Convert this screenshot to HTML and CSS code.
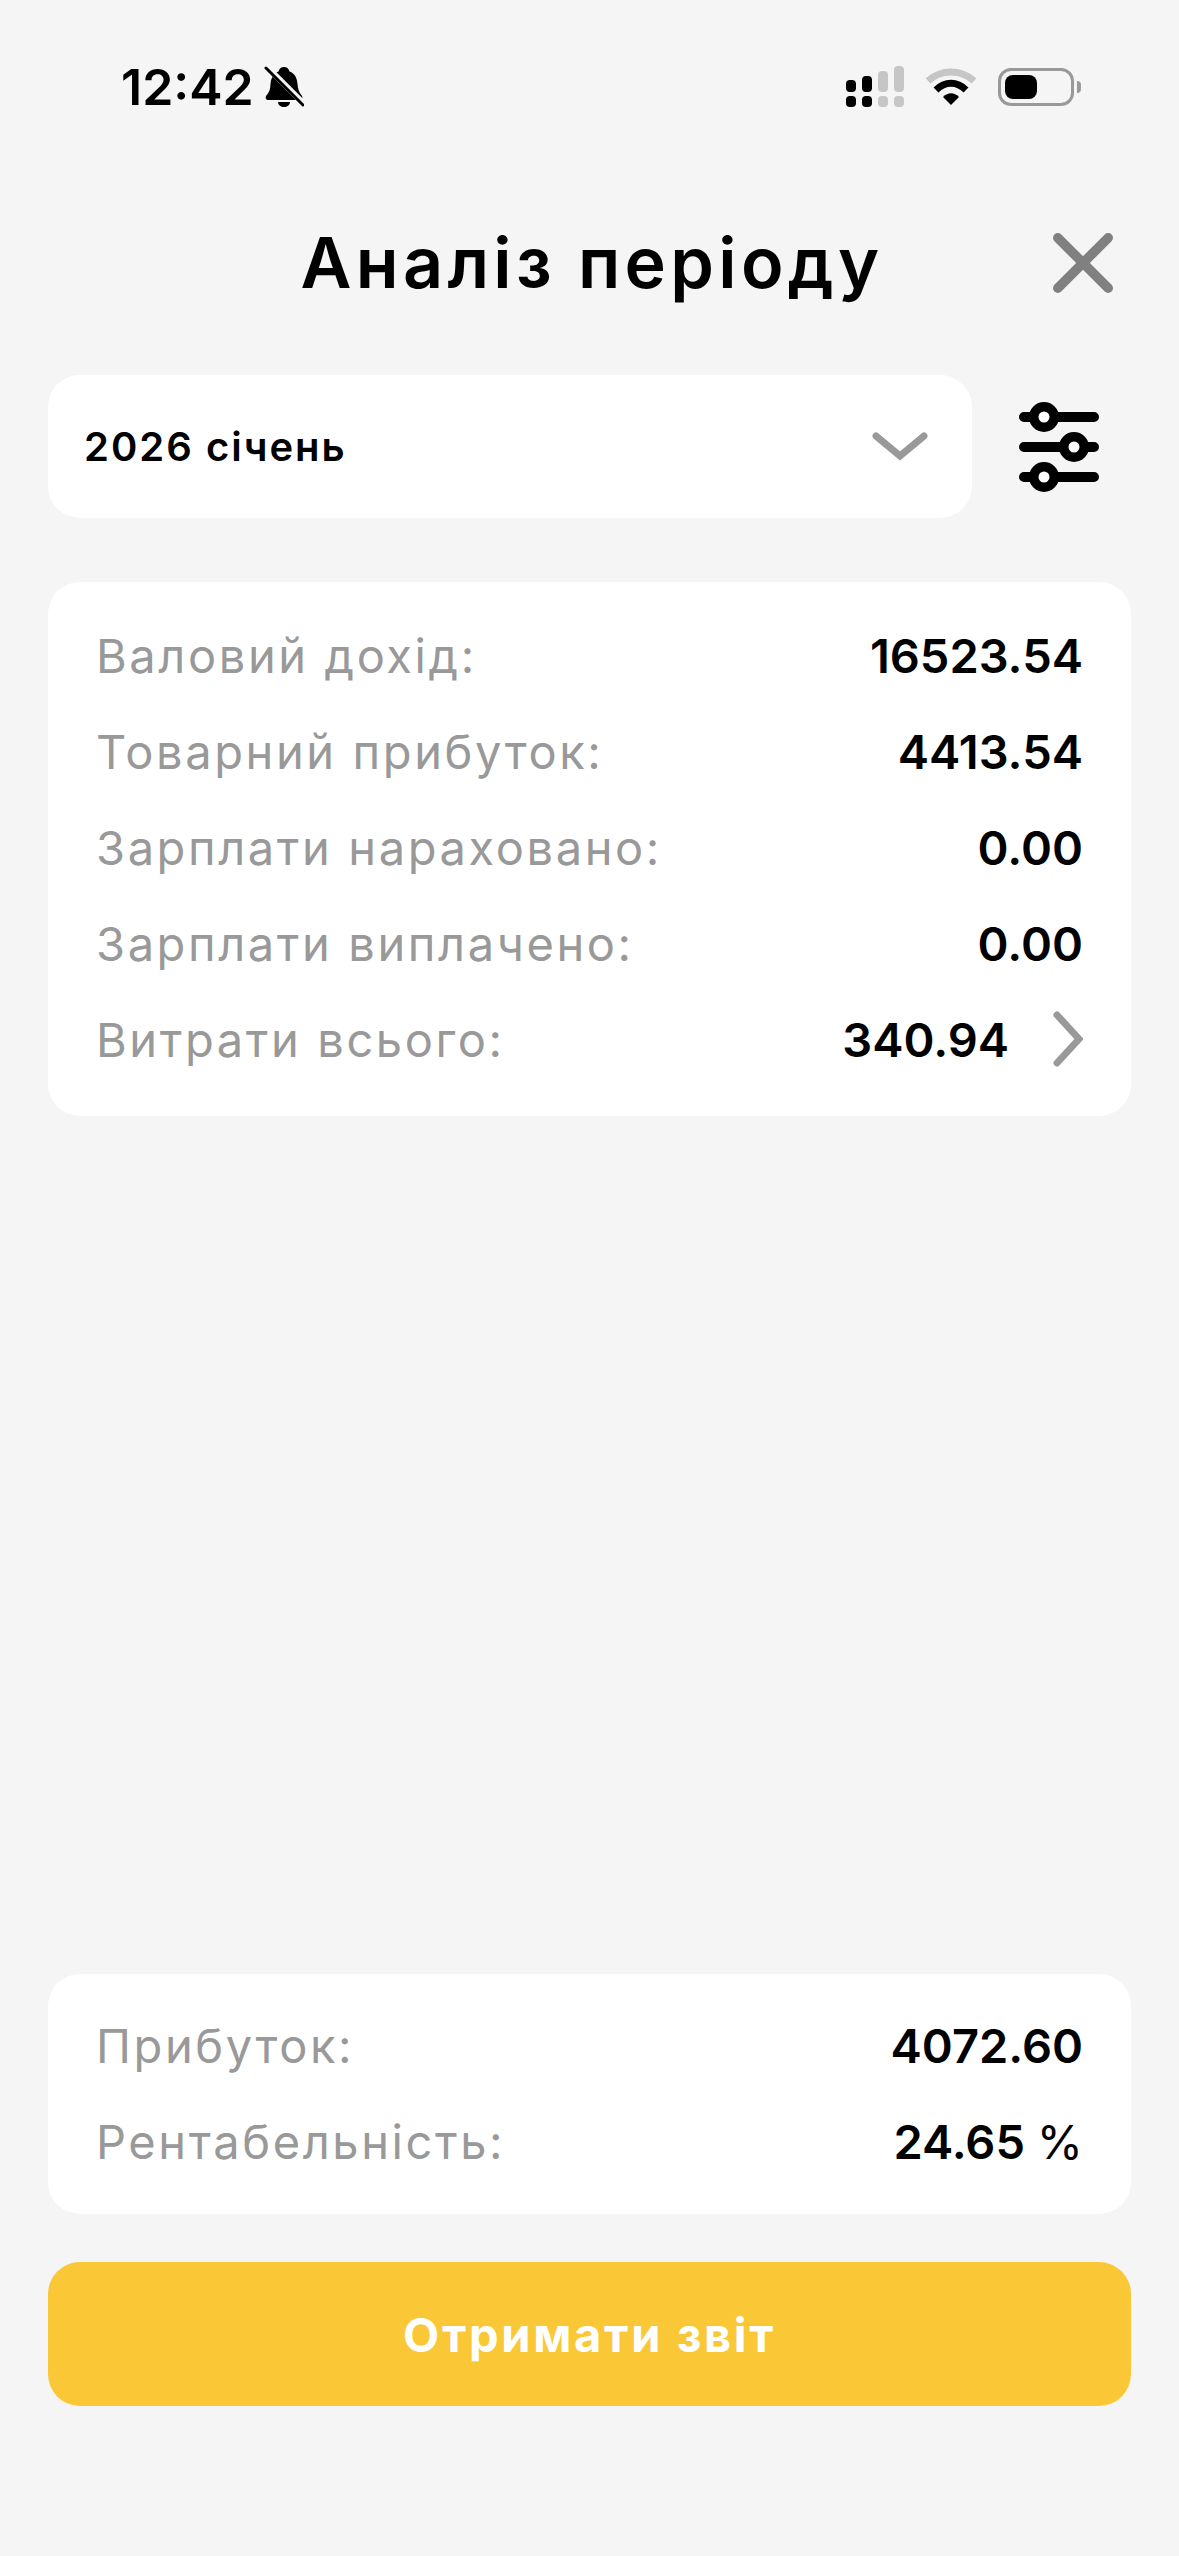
FILE: index.html
```html
<!DOCTYPE html>
<html lang="uk">

<head>
    <meta charset="UTF-8">
    <meta name="viewport" content="width=device-width, initial-scale=1.0">
    <title>Аналіз періоду</title>
    <link rel="stylesheet" href="styles.css">
</head>

<body>
    <div class="screen">
        <div class="status-bar">
            <div class="status-left">
                <span class="status-time">12:42</span>
                <svg class="bell" viewBox="0 0 40 42" fill="#000">
                    <path d="M20 1c3 0 5 2 5.500 4.500C31 7.500 33 12 33.500 18c.4 5 1.500 8 4.500 12 1 2 0 4-2 4H4c-2 0-3-2-2-4 3-3 4.500-7 4.500-12C7 12 9.500 7.500 14.500 5.500 15 3 17 1 20 1z" />
                    <path d="M14 36h12c0 3-3 5-6 5s-6-2-6-5z" />
                    <path d="M4 2l36 36" stroke="#f5f5f5" stroke-width="6" />
                    <path d="M2 2l37 37" stroke="#000" stroke-width="3" stroke-linecap="round" />
                </svg>
            </div>
            <div class="status-right">
                <svg class="signal" viewBox="0 0 58 42">
                    <rect x="0" y="14" width="10" height="12" rx="4" fill="#000" />
                    <rect x="16" y="10" width="10" height="16" rx="4" fill="#000" />
                    <rect x="32" y="5" width="10" height="21" rx="4" fill="#c6c6c6" />
                    <rect x="48" y="0" width="10" height="26" rx="4" fill="#c6c6c6" />
                    <rect x="0" y="30" width="10" height="11" rx="4" fill="#000" />
                    <rect x="16" y="30" width="10" height="11" rx="4" fill="#000" />
                    <rect x="32" y="30" width="10" height="11" rx="4" fill="#c6c6c6" />
                    <rect x="48" y="30" width="10" height="11" rx="4" fill="#c6c6c6" />
                </svg>
                <svg class="wifi" viewBox="0 0 50 38">
                    <path d="M2 13C15 1 35 1 48 13" fill="none" stroke="#c6c6c6" stroke-width="7" />
                    <path d="M10 22C19 13 31 13 40 22" fill="none" stroke="#000" stroke-width="7" />
                    <path d="M17 29C22 24 28 24 33 29L25 37z" fill="#000" />
                </svg>
                <div class="battery">
                    <div class="battery-body">
                        <div class="battery-level"></div>
                    </div>
                    <div class="battery-cap"></div>
                </div>
            </div>
        </div>

        <div class="header">
            <h1 class="title">Аналіз періоду</h1>
            <svg class="close-icon" viewBox="0 0 62 62" fill="none" stroke="#808080" stroke-width="10" stroke-linecap="round">
                <path d="M5 5l52 52M57 5L5 57" />
            </svg>
        </div>

        <div class="period-row">
            <div class="select">
                <span class="select-text">2026 січень</span>
                <svg class="select-arrow" viewBox="0 0 56 30" fill="none" stroke="#999" stroke-width="7" stroke-linecap="round" stroke-linejoin="miter">
                    <path d="M4 4l24 20L52 4" />
                </svg>
            </div>
            <svg class="filter-icon" viewBox="0 0 80 90" fill="none" stroke="#000" stroke-linecap="round">
                <path d="M5 15h70M5 45h70M5 75h70" stroke-width="10" />
                <circle cx="25" cy="15" r="10.250" fill="#fff" stroke-width="9.500" />
                <circle cx="55" cy="45" r="10.250" fill="#fff" stroke-width="9.500" />
                <circle cx="25" cy="75" r="10.250" fill="#fff" stroke-width="9.500" />
            </svg>
        </div>

        <div class="card">
            <div class="row">
                <span class="row-label">Валовий дохід:</span>
                <span class="row-value">16523.54</span>
            </div>
            <div class="row">
                <span class="row-label">Товарний прибуток:</span>
                <span class="row-value">4413.54</span>
            </div>
            <div class="row">
                <span class="row-label">Зарплати нараховано:</span>
                <span class="row-value">0.00</span>
            </div>
            <div class="row">
                <span class="row-label">Зарплати виплачено:</span>
                <span class="row-value">0.00</span>
            </div>
            <div class="row">
                <span class="row-label">Витрати всього:</span>
                <span class="row-value row-value--link">340.94
                    <svg class="row-arrow" viewBox="0 0 30 56" fill="none" stroke="#999" stroke-width="7" stroke-linecap="round">
                        <path d="M4 4l22 24L4 52" />
                    </svg>
                </span>
            </div>
        </div>

        <div class="spacer"></div>

        <div class="card card--summary">
            <div class="row">
                <span class="row-label">Прибуток:</span>
                <span class="row-value">4072.60</span>
            </div>
            <div class="row">
                <span class="row-label">Рентабельність:</span>
                <span class="row-value">24.65 <span class="percent">%</span></span>
            </div>
        </div>

        <button class="report-btn">Отримати звіт</button>
    </div>
</body>

</html>
```

FILE: styles.css
```css
/*
MAIN COLOR: #fac837
BACKGROUND: #f5f5f5
GREY TEXT: #999999
*/

* {
    margin: 0;
    padding: 0;
    box-sizing: border-box;
}

body {
    font-family: 'Inter', sans-serif;
    color: #000;
    background-color: #f5f5f5;
}

.screen {
    width: 1179px;
    height: 2556px;
    padding: 0 48px 150px;
    display: flex;
    flex-direction: column;
}

.status-bar {
    height: 62px;
    margin-top: 56px;
    padding: 0 50px 0 73px;
    display: flex;
    justify-content: space-between;
    align-items: center;
}

.status-left {
    display: flex;
    align-items: center;
    gap: 10px;
}

.status-time {
    font-size: 50px;
    font-weight: 600;
}

.bell {
    width: 40px;
    height: 42px;
}

.status-right {
    display: flex;
    align-items: center;
    gap: 22px;
}

.signal {
    width: 58px;
    height: 42px;
}

.wifi {
    width: 50px;
    height: 38px;
}

.battery {
    display: flex;
    align-items: center;
    gap: 3px;
}

.battery-body {
    width: 76px;
    height: 38px;
    padding: 4px;
    border: 3px solid #999;
    border-radius: 13px;
}

.battery-level {
    width: 32px;
    height: 100%;
    background-color: #000;
    border-radius: 8px;
}

.battery-cap {
    width: 4px;
    height: 12px;
    background-color: #999;
    border-radius: 0 6px 6px 0;
}

.header {
    height: 100px;
    margin-top: 94px;
    position: relative;
    display: flex;
    justify-content: center;
    align-items: center;
}

.title {
    margin-left: 5px;
    font-size: 70px;
    font-weight: 600;
    letter-spacing: 4.3px;
}

.close-icon {
    width: 60px;
    height: 60px;
    position: absolute;
    right: 18px;
    top: 21px;
}

.period-row {
    margin-top: 63px;
    display: flex;
    align-items: center;
    justify-content: space-between;
    padding-right: 32px;
}

.select {
    width: 924px;
    height: 143px;
    padding: 0 44px 0 36px;
    background-color: #fff;
    border-radius: 32px;
    display: flex;
    justify-content: space-between;
    align-items: center;
}

.select-text {
    font-size: 40px;
    font-weight: 600;
    letter-spacing: 2px;
}

.select-arrow {
    width: 56px;
    height: 30px;
}

.filter-icon {
    width: 80px;
    height: 90px;
}

.card {
    margin-top: 64px;
    padding: 25px 48px 29px;
    background-color: #fff;
    border-radius: 32px;
}

.card--summary {
    margin-top: 0;
    padding-top: 23px;
    padding-bottom: 25px;
}

.row {
    height: 96px;
    display: flex;
    justify-content: space-between;
    align-items: center;
}

.row-label {
    font-size: 47px;
    color: #999;
    letter-spacing: 2.6px;
}

.row-value {
    font-size: 47px;
    font-weight: 600;
}

.row-value--link {
    display: flex;
    align-items: center;
    gap: 44px;
}

.row-arrow {
    width: 30px;
    height: 56px;
}

.percent {
    font-weight: 400;
}

.spacer {
    flex: 1;
}

.report-btn {
    height: 144px;
    margin-top: 48px;
    border: none;
    border-radius: 32px;
    background-color: #fac837;
    color: #fff;
    font-family: 'Inter', sans-serif;
    font-size: 47px;
    font-weight: 700;
    letter-spacing: 2.700px;
    cursor: pointer;
}
```
